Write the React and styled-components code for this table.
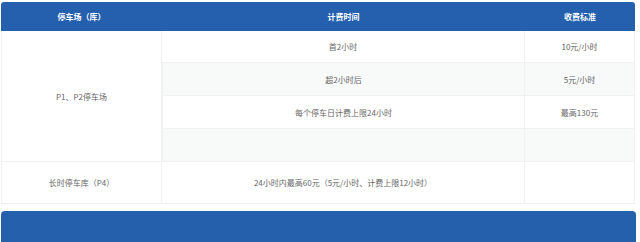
import styled, { createGlobalStyle } from "styled-components";

const GlobalStyle = createGlobalStyle`
  html, body {
    margin: 0;
    padding: 0;
    background: #ffffff;
  }
  body {
    font-family: "Noto Sans CJK SC", "Noto Sans", sans-serif;
  }
`;

const Page = styled.div`
  padding: 2px 5px 0 1px;
  display: flex;
  flex-direction: column;
  gap: 7px;
`;

const Table = styled.table`
  width: 634px;
  border-collapse: separate;
  border-spacing: 0;
  table-layout: fixed;
  font-size: 8px;
  color: #666666;
`;

const HeadCell = styled.th`
  background: #2460ae;
  color: #ffffff;
  font-weight: 700;
  height: 29px;
  padding: 0;
  text-align: center;
  &:first-child { border-top-left-radius: 3px; }
  &:last-child { border-top-right-radius: 3px; }
`;

const Cell = styled.td`
  height: ${(p) => p.$h || 32}px;
  padding: 0;
  text-align: center;
  vertical-align: middle;
  background: ${(p) => (p.$shade ? "#f8f9f9" : "#ffffff")};
  border-right: 1px solid #f1f1f1;
  border-bottom: 1px solid #f1f1f1;
  &:first-child { border-left: 1px solid #f1f1f1; }
`;

const Footer = styled.div`
  width: 635px;
  height: 40px;
  background: #2460ac;
  border-radius: 4px 4px 0 0;
`;

const rows = [
  { time: "首2小时", fee: "10元/小时", h: 31 },
  { time: "超2小时后", fee: "5元/小时", h: 32, shade: true },
  { time: "每个停车日计费上限24小时", fee: "最高130元", h: 32 },
  { time: "", fee: "", h: 32, shade: true },
];

export default function App() {
  return (
    <>
      <GlobalStyle />
      <Page>
        <Table>
          <colgroup>
            <col style={{ width: 161 }} />
            <col style={{ width: 363 }} />
            <col style={{ width: 110 }} />
          </colgroup>
          <thead>
            <tr>
              <HeadCell>停车场（库）</HeadCell>
              <HeadCell>计费时间</HeadCell>
              <HeadCell>收费标准</HeadCell>
            </tr>
          </thead>
          <tbody>
            {rows.map((r, i) => (
              <tr key={i}>
                {i === 0 && <Cell rowSpan={4}>P1、P2停车场</Cell>}
                <Cell $h={r.h} $shade={r.shade}>{r.time}</Cell>
                <Cell $h={r.h} $shade={r.shade}>{r.fee}</Cell>
              </tr>
            ))}
            <tr>
              <Cell $h={41}>长时停车库（P4）</Cell>
              <Cell $h={41}>24小时内最高60元（5元/小时、计费上限12小时）</Cell>
              <Cell $h={41}></Cell>
            </tr>
          </tbody>
        </Table>
        <Footer />
      </Page>
    </>
  );
}
